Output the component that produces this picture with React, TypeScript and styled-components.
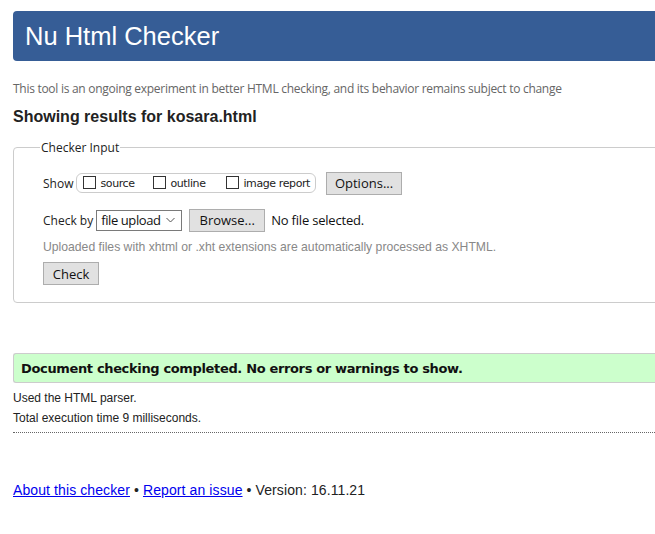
import React from "react";
import styled, { createGlobalStyle } from "styled-components";

const Global = createGlobalStyle`
  html, body { margin: 0; padding: 0; background: #fff; overflow: hidden; }
  body { font-family: "Liberation Sans", Arial, sans-serif; color: #222; }
`;

const Page = styled.div`
  width: 720px;
  padding: 11px 0 0 13px;
`;

const Header = styled.h1`
  margin: 0;
  height: 50px;
  background: #365d96;
  border-radius: 4px 0 0 4px;
  color: #fff;
  font: 400 25.5px "Liberation Sans", Arial, sans-serif;
  line-height: 50px;
  padding-left: 12px;
`;

const Intro = styled.p`
  margin: 19px 0 0;
  font: 400 12px "Open Sans", sans-serif;
  color: #666;
  letter-spacing: -0.28px;
`;

const Results = styled.h2`
  margin: 11px 0 0;
  font: 700 16px "Liberation Sans", Arial, sans-serif;
  color: #222;
`;

const Fieldset = styled.fieldset`
  margin: 13px 0 0;
  border: 1px solid #ccc;
  border-radius: 4px;
  padding: 12px 29px 17px 29px;
`;

const Legend = styled.legend`
  font: 400 12px "Open Sans", sans-serif;
  color: #222;
  padding: 0 1px;
  margin-left: -3px;
`;

const Row = styled.div<{ $mt?: number }>`
  display: flex;
  align-items: center;
  margin-top: ${(p) => p.$mt ?? 0}px;
  font: 400 12px "Open Sans", sans-serif;
  color: #222;
  height: 22px;
  white-space: nowrap;
`;

const Pill = styled.span`
  display: inline-flex;
  align-items: center;
  height: 18px;
  border: 1px solid #ccc;
  border-radius: 6px;
  margin-left: 3px;
  padding: 0 5px 0 6px;
  white-space: nowrap;
`;

const CheckLabel = styled.label<{ $w?: number }>`
  display: inline-flex;
  align-items: center;
  width: ${(p) => (p.$w ? `${p.$w}px` : "auto")};
  font: 400 11px "DejaVu Sans", Verdana, sans-serif;
  letter-spacing: -0.4px;
  color: #222;
  white-space: nowrap;
`;

const Box = styled.span`
  width: 11px;
  height: 11px;
  border: 1px solid #333;
  margin-right: 4px;
  background: #fff;
  flex: none;
  position: relative;
  top: -1px;
`;

const Button = styled.button<{ $w: number; $ml?: number; $mt?: number }>`
  display: block;
  width: ${(p) => p.$w}px;
  height: 23px;
  margin: ${(p) => p.$mt ?? 0}px 0 0 ${(p) => p.$ml ?? 0}px;
  background: #e1e1e1;
  border: 1px solid #adadad;
  border-radius: 0;
  font: 400 13px "Open Sans", sans-serif;
  color: #111;
  padding: 0;
  white-space: nowrap;
`;

const Select = styled.span`
  display: inline-flex;
  align-items: center;
  justify-content: space-between;
  width: 86px;
  height: 21px;
  border: 1px solid #7a7a7a;
  margin-left: 3px;
  padding: 0 6px 0 4px;
  box-sizing: border-box;
  font: 400 13px "Open Sans", sans-serif;
  letter-spacing: -0.4px;
  color: #111;
  white-space: nowrap;
`;

const FileText = styled.span`
  margin-left: 6px;
  font: 400 13px "Open Sans", sans-serif;
  letter-spacing: -0.2px;
  color: #111;
`;

const Hint = styled.p`
  margin: 9px 0 0;
  font: 400 12.2px "Liberation Sans", Arial, sans-serif;
  color: #888;
`;

const Done = styled.div`
  margin-top: 50px;
  height: 28px;
  background: #ccffcc;
  border: 1px solid #ccc;
  border-right: none;
  border-radius: 3px 0 0 3px;
  display: flex;
  align-items: center;
  padding-left: 7px;
  font: 700 13px "DejaVu Sans", Verdana, sans-serif;
  color: #111;
  letter-spacing: -0.35px;
`;

const Info = styled.p<{ $mt: number }>`
  margin: ${(p) => p.$mt}px 0 0;
  font: 400 12px "Liberation Sans", Arial, sans-serif;
  color: #222;
  line-height: 14px;
`;

const Rule = styled.hr`
  margin: 7px 0 0;
  border: none;
  border-top: 1px dotted #666;
  height: 0;
`;

const Footer = styled.p`
  margin: 49px 0 0;
  font: 400 14px "Liberation Sans", Arial, sans-serif;
  color: #222;
  letter-spacing: 0.1px;
`;

const Link = styled.a`
  color: #0000ee;
  text-decoration: underline;
`;

export default function App() {
  return (
    <>
      <Global />
      <Page>
        <Header>Nu Html Checker</Header>
        <Intro>
          This tool is an ongoing experiment in better HTML checking, and its behavior remains subject to change
        </Intro>
        <Results>Showing results for kosara.html</Results>
        <Fieldset>
          <Legend>Checker Input</Legend>
          <Row $mt={4}>
            Show
            <Pill>
              <CheckLabel $w={70}>
                <Box />
                source
              </CheckLabel>
              <CheckLabel $w={73}>
                <Box />
                outline
              </CheckLabel>
              <CheckLabel>
                <Box />
                image report
              </CheckLabel>
            </Pill>
            <Button $w={76} $ml={10}>Options...</Button>
          </Row>
          <Row $mt={15}>
            Check by
            <Select>
              file upload
              <svg width="9" height="6" viewBox="0 0 9 6">
                <path d="M0.5 1 L4.5 5 L8.5 1" fill="none" stroke="#555" strokeWidth="1" />
              </svg>
            </Select>
            <Button $w={76} $ml={7}>Browse...</Button>
            <FileText>No file selected.</FileText>
          </Row>
          <Hint>Uploaded files with xhtml or .xht extensions are automatically processed as XHTML.</Hint>
          <Button $w={56} $mt={8}>Check</Button>
        </Fieldset>
        <Done>Document checking completed. No errors or warnings to show.</Done>
        <Info $mt={8}>Used the HTML parser.</Info>
        <Info $mt={6}>Total execution time 9 milliseconds.</Info>
        <Rule />
        <Footer>
          <Link href="#">About this checker</Link> • <Link href="#">Report an issue</Link> • Version: 16.11.21
        </Footer>
      </Page>
    </>
  );
}
